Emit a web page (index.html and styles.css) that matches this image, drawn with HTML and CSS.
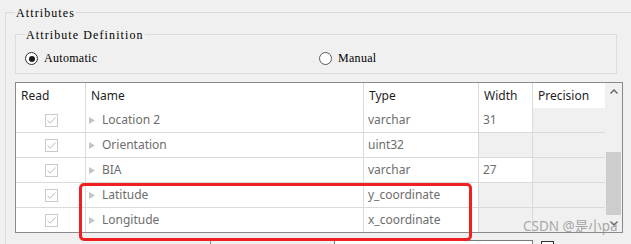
FILE: index.html
```html
<!DOCTYPE html>
<html lang="en">
<head>
    <meta charset="UTF-8">
    <title>Attributes</title>
    <link rel="stylesheet" href="styles.css">
</head>
<body>
    <div class="group outer">
        <span class="groupTitle">Attributes</span>

        <div class="group inner">
            <span class="groupTitle">Attribute Definition</span>
            <div class="radioRow">
                <label class="radioOption auto"><span class="radio checked"></span>Automatic</label>
                <label class="radioOption"><span class="radio"></span>Manual</label>
            </div>
        </div>

        <div class="listView">
            <div class="grid">
                <div class="cell head">Read</div>
                <div class="cell head">Name</div>
                <div class="cell head">Type</div>
                <div class="cell head">Width</div>
                <div class="cell head noRight">Precision</div>

                <div class="cell check"><span class="box"><svg width="13" height="13" viewBox="0 0 13 13"><path d="M2.5 6.5 L5.2 9.2 L10.5 3.5" fill="none" stroke="#bdbdbd" stroke-width="1"/></svg></span></div>
                <div class="cell name"><svg class="arrow" width="6" height="7" viewBox="0 0 6 7"><polygon points="0,0 6,3.5 0,7" fill="#c4c4c4"/></svg>Location 2</div>
                <div class="cell">varchar</div>
                <div class="cell">31</div>
                <div class="cell off noRight"></div>

                <div class="cell check"><span class="box"><svg width="13" height="13" viewBox="0 0 13 13"><path d="M2.5 6.5 L5.2 9.2 L10.5 3.5" fill="none" stroke="#bdbdbd" stroke-width="1"/></svg></span></div>
                <div class="cell name"><svg class="arrow" width="6" height="7" viewBox="0 0 6 7"><polygon points="0,0 6,3.5 0,7" fill="#c4c4c4"/></svg>Orientation</div>
                <div class="cell">uint32</div>
                <div class="cell off"></div>
                <div class="cell off noRight"></div>

                <div class="cell check"><span class="box"><svg width="13" height="13" viewBox="0 0 13 13"><path d="M2.5 6.5 L5.2 9.2 L10.5 3.5" fill="none" stroke="#bdbdbd" stroke-width="1"/></svg></span></div>
                <div class="cell name"><svg class="arrow" width="6" height="7" viewBox="0 0 6 7"><polygon points="0,0 6,3.5 0,7" fill="#c4c4c4"/></svg>BIA</div>
                <div class="cell">varchar</div>
                <div class="cell">27</div>
                <div class="cell off noRight"></div>

                <div class="cell check"><span class="box"><svg width="13" height="13" viewBox="0 0 13 13"><path d="M2.5 6.5 L5.2 9.2 L10.5 3.5" fill="none" stroke="#bdbdbd" stroke-width="1"/></svg></span></div>
                <div class="cell name"><svg class="arrow" width="6" height="7" viewBox="0 0 6 7"><polygon points="0,0 6,3.5 0,7" fill="#c4c4c4"/></svg>Latitude</div>
                <div class="cell">y_coordinate</div>
                <div class="cell off"></div>
                <div class="cell off noRight"></div>

                <div class="cell check last"><span class="box"><svg width="13" height="13" viewBox="0 0 13 13"><path d="M2.5 6.5 L5.2 9.2 L10.5 3.5" fill="none" stroke="#bdbdbd" stroke-width="1"/></svg></span></div>
                <div class="cell name last"><svg class="arrow" width="6" height="7" viewBox="0 0 6 7"><polygon points="0,0 6,3.5 0,7" fill="#c4c4c4"/></svg>Longitude</div>
                <div class="cell last">x_coordinate</div>
                <div class="cell off last"></div>
                <div class="cell off last noRight"></div>
            </div>

            <div class="scrollbar">
                <div class="scrollBtn"><svg width="8" height="5" viewBox="0 0 8 5"><path d="M0.5 4.5 L4 1 L7.5 4.5" fill="none" stroke="#606060" stroke-width="1.3"/></svg></div>
                <div class="thumb"></div>
                <div class="scrollSpace"></div>
                <div class="scrollBtn"><svg width="8" height="5" viewBox="0 0 8 5"><path d="M0.5 0.5 L4 4 L7.5 0.5" fill="none" stroke="#606060" stroke-width="1.3"/></svg></div>
            </div>
        </div>

        <div class="bottomRow">
            <div class="field first"></div>
            <div class="field second"></div>
            <span class="smallCheck"></span>
        </div>
    </div>

    <div class="highlight"></div>
    <div class="watermark">CSDN @是小pa</div>
</body>
</html>
```

FILE: styles.css
```css
html, body {
    margin: 0;
    width: 631px;
    height: 244px;
    overflow: hidden;
}

body {
    background-color: #f0f0f0;
    font-family: "Noto Sans", sans-serif;
    position: relative;
    padding-top: 12px;
    box-sizing: border-box;
}

.group {
    border: 1px solid #dcdcdc;
    box-sizing: border-box;
}

.outer {
    margin-left: 5px;
    border-right: none;
    border-bottom: none;
    height: 260px;
}

/* bitmap-like dialog font: serif with wide spacing */
.groupTitle {
    display: block;
    width: fit-content;
    height: 12px;
    font-family: "Liberation Serif", serif;
    font-size: 12px;
    letter-spacing: 1.1px;
    line-height: 12px;
    color: #000;
    background-color: #f0f0f0;
    padding: 0 1px 0 1px;
    margin-top: -6px;
    margin-left: 9px;
}

.inner {
    margin-top: 15px;
    margin-left: 9px;
    width: 602px;
    height: 40px;
}

.radioRow {
    display: flex;
    align-items: center;
    padding-left: 9px;
    margin-top: 11px;
    height: 13px;
}

.radioOption {
    display: flex;
    align-items: center;
    font-family: "Liberation Serif", serif;
    font-size: 12px;
    letter-spacing: 0.3px;
    line-height: 13px;
    color: #000;
}

.radioOption.auto {
    width: 294px;
}

.radio {
    width: 13px;
    height: 13px;
    border: 1px solid #5a5a5a;
    border-radius: 50%;
    background-color: #fff;
    box-sizing: border-box;
    margin-right: 6px;
    position: relative;
}

.radio.checked {
    border-color: #333;
}

.radio.checked::after {
    content: "";
    position: absolute;
    left: 2.5px;
    top: 2.5px;
    width: 6px;
    height: 6px;
    border-radius: 50%;
    background-color: #1a1a1a;
}

.listView {
    display: flex;
    margin-top: 8px;
    margin-left: 9px;
    width: 608px;
    height: 151px;
    border: 1px solid #8a8a8a;
    box-sizing: border-box;
    background-color: #fff;
}

.grid {
    display: grid;
    grid-template-columns: 70px 278px 115px 54px 72px;
    grid-template-rows: repeat(5, 25px) 24px;
}

.cell {
    box-sizing: border-box;
    border-right: 1px solid #dadada;
    border-bottom: 1px solid #dadada;
    font-size: 12px;
    line-height: 24px;
    color: #6d6d6d;
    padding-left: 4px;
    white-space: nowrap;
    display: flex;
    align-items: center;
}

.cell.head {
    border-bottom: none;
    color: #1e1e1e;
    padding-left: 5px;
    line-height: 25px;
}

.cell.last {
    border-bottom: none;
}

.cell.noRight {
    border-right: none;
}

.cell.off {
    background-color: #f0f0f0;
}

.cell.check {
    justify-content: center;
    padding-left: 0;
}

.box {
    width: 13px;
    height: 13px;
    border: 1px solid #cacaca;
    box-sizing: border-box;
    display: flex;
    align-items: center;
    justify-content: center;
    margin-left: 1px;
}

.box svg {
    flex: none;
}

.cell.name {
    padding-left: 3px;
}

.arrow {
    margin-right: 7px;
}

.scrollbar {
    width: 17px;
    background-color: #f0f0f0;
    display: flex;
    flex-direction: column;
}

.scrollBtn {
    height: 17px;
    display: flex;
    align-items: center;
    justify-content: center;
}

.thumb {
    margin-top: 52px;
    margin-left: 1px;
    width: 15px;
    height: 63px;
    background-color: #cdcdcd;
}

.scrollSpace {
    flex: 1;
}

.bottomRow {
    display: flex;
    margin-top: 7px;
}

.field {
    height: 20px;
    border: 1px solid #a0a0a0;
    box-sizing: border-box;
}

.field.first {
    margin-left: 204px;
    width: 125px;
    background-color: #f0f0f0;
    border-color: #8a8a8a;
}

.field.second {
    margin-left: -1px;
    width: 199px;
    background-color: #fff;
    border-color: #7a7a7a;
}

.smallCheck {
    width: 13px;
    height: 13px;
    border: 1px solid #333;
    box-sizing: border-box;
    margin-left: 8px;
    margin-top: 1px;
    background-color: #fff;
}

.highlight {
    position: absolute;
    left: 79px;
    top: 183px;
    width: 393px;
    height: 58px;
    border: 3px solid #f02020;
    border-radius: 5px;
    box-sizing: border-box;
}

.watermark {
    position: absolute;
    left: 523px;
    top: 217px;
    font-family: "Noto Sans", "Noto Sans CJK SC", sans-serif;
    font-size: 13.5px;
    line-height: 18px;
    color: rgba(140, 140, 140, 0.75);
    white-space: nowrap;
}
```
